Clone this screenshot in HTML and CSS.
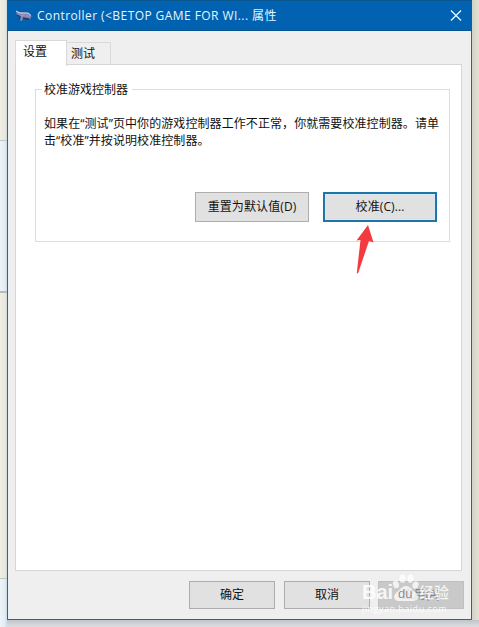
FILE: index.html
```
<!DOCTYPE html>
<html lang="zh-CN">
<head>
    <meta charset="UTF-8">
    <meta name="viewport" content="width=device-width, initial-scale=1.0">
    <title>Controller 属性</title>
    <link rel="stylesheet" href="styles.css">
</head>
<body>
    <div class="desktop">
        <div class="desktop-left">
            <div class="strip cream"></div>
            <div class="strip pale"></div>
            <div class="strip cream tall"></div>
            <div class="strip pale last"></div>
        </div>
        <div class="dialog">
            <div class="title-bar">
                <svg class="app-icon" width="16" height="14" viewBox="0 0 16 14">
                    <path d="M0 2L3 3L13 4L15.5 7L14 10L9 9L7 9L6 12L3 11L4 8L1 6Z" fill="#858bb5"/>
                    <path d="M0 2L4 4H12L15 6.5" fill="none" stroke="#d9d2e2"/>
                    <path d="M1 6L4 7.5L3.5 11M7 9L13 10" fill="none" stroke="#2c3468" stroke-width="1.3"/>
                    <path d="M5 6.5h3M11 7h2" stroke="#c9869f"/>
                </svg>
                <span class="title">Controller (&lt;BETOP GAME FOR WI... 属性</span>
                <svg class="close" width="12" height="12" viewBox="0 0 12 12">
                    <path d="M1 0.5L11 10.5M11 0.5L1 10.5" stroke="#e4f6ff" stroke-width="1.3"/>
                </svg>
            </div>
            <div class="tabs">
                <div class="tab active">设置</div>
                <div class="tab">测试</div>
            </div>
            <div class="panel">
                <div class="group">
                    <div class="group-title">校准游戏控制器</div>
                    <p>如果在“测试”页中你的游戏控制器工作不正常，你就需要校准控制器。请单<br>击“校准”并按说明校准控制器。</p>
                    <div class="group-buttons">
                        <button>重置为默认值(D)</button>
                        <button class="focused">校准(C)...</button>
                    </div>
                </div>
            </div>
            <div class="footer">
                <button>确定</button>
                <button>取消</button>
                <button class="disabled">应用(A)</button>
            </div>
        </div>
        <div class="desktop-bottom"></div>
    </div>

    <svg class="arrow" width="20" height="52" viewBox="0 0 20 52">
        <path d="M12 1L17.5 18.5L13 17L2 49.5L0.8 49L4.5 16L0.5 16.5Z" fill="#f33b3f"/>
    </svg>

    <!-- Watermark -->
    <div class="watermark">
        <div class="brand">
            <span class="bai">Bai</span>
            <span class="paw">
                <svg width="30" height="29" viewBox="0 0 30 29">
                    <ellipse cx="5" cy="10.5" rx="3" ry="3.8" transform="rotate(-15 5 10.5)"/>
                    <ellipse cx="11.5" cy="4.5" rx="3" ry="4.2"/>
                    <ellipse cx="19.5" cy="4.5" rx="3" ry="4.2" transform="rotate(10 19.5 4.5)"/>
                    <ellipse cx="24.5" cy="11" rx="3" ry="3.8" transform="rotate(18 24.5 11)"/>
                    <path d="M15 12C11 12 9 16 6 18C1 22 3 27 8 27H22C27 27 29 22 24 18C21 16 19 12 15 12Z"/>
                </svg>
                <span class="du">du</span>
            </span>
            <span class="cn">经验</span>
        </div>
        <div class="site">jingyan.baidu.com</div>
    </div>
</body>
</html>
```
FILE: styles.css
```
* {
    box-sizing: border-box;
}

body {
    margin: 0;
    width: 479px;
    height: 627px;
    overflow: hidden;
    position: relative;
    font-family: "Open Sans", "Noto Sans CJK SC", sans-serif;
    font-size: 12px;
    color: #111;
}

.desktop {
    display: grid;
    grid-template-columns: 7px 465px 7px;
    grid-template-rows: 620px 7px;
    height: 627px;
    background: linear-gradient(to right, #d2d1c5 472px, #e4e2d5 479px);
}

.desktop-left {
    grid-row: 1 / 3;
    display: flex;
    flex-direction: column;
}

.strip {
    height: 141px;
    border-bottom: 1px solid #bfc4ca;
}

.cream {
    background: linear-gradient(to right, #f0eee6, #e9e8d8 5px, #c9dcea);
}

.pale {
    height: 152px;
    border-bottom: 2px solid #b9b9b9;
    background: linear-gradient(to right, #edf5fb, #e5eaee 5px, #c1dced);
}

.tall {
    height: 286px;
}

.last {
    height: 48px;
    border: none;
}

.dialog {
    display: flex;
    flex-direction: column;
    border: 1px solid #28688f;
    border-top: none;
    background-color: #efefef;
}

.title-bar {
    display: flex;
    align-items: center;
    height: 31px;
    margin: 0 -1px;
    padding: 0 10px 0 9px;
    background-color: #0062b1;
    border-top: 1px solid #0a568f;
    border-bottom: 1px solid #07558f;
    color: #e4f6ff;
}

.title {
    flex: 1;
    margin: -1px 0 0 5px;
    letter-spacing: 0.43px;
    white-space: nowrap;
}

.tabs {
    display: flex;
    align-items: flex-end;
    height: 34px;
    padding-left: 7px;
}

.tab {
    width: 44px;
    height: 23px;
    padding-left: 4px;
    line-height: 22px;
    border: 1px solid #d9d9d9;
    border-left: none;
    border-bottom: none;
}

.tab.active {
    position: relative;
    width: 52px;
    height: 26px;
    margin-bottom: -1px;
    padding-left: 7px;
    border-left: 1px solid #d9d9d9;
    background-color: #fff;
}

.panel {
    height: 507px;
    margin: -1px 9px 0 7px;
    padding: 24px 11px 0 19px;
    border: 1px solid #d6d6d8;
    background-color: #fff;
}

.group {
    height: 153px;
    padding: 0 12px 0 8px;
    border: 1px solid #dcdcdc;
}

.group-title {
    width: 90px;
    height: 18px;
    margin: -9px 0 0 -2px;
    padding-left: 2px;
    line-height: 18px;
    background-color: #fff;
}

.group p {
    height: 36px;
    margin: 16px 0 0;
    line-height: 17px;
    letter-spacing: 0.08px;
    white-space: nowrap;
}

.group-buttons {
    display: flex;
    justify-content: flex-end;
    gap: 14px;
    margin-top: 41px;
}

button {
    width: 86px;
    height: 28px;
    padding: 0 0 2px;
    border: 1px solid #adadad;
    background-color: #e1e1e1;
    color: #111;
    font: inherit;
}

.group-buttons button {
    width: 114px;
    height: 30px;
    letter-spacing: 0.1px;
}

.group-buttons .focused {
    border: 2px solid #1d75a9;
    box-shadow: inset 0 0 0 1px #d4eaf7;
}

.footer {
    display: flex;
    justify-content: flex-end;
    gap: 9px;
    padding: 10px 7px 0 0;
}

button.disabled {
    margin-left: -1px;
    border-color: #bfbfbf;
    background-color: #c9c9c9;
    color: #858585;
}

.desktop-bottom {
    grid-column: 2 / 4;
    background: linear-gradient(to bottom, #bec5cb, #dedee1);
}

.arrow {
    position: absolute;
    left: 356px;
    top: 224px;
}

/* Translucent logo over the footer buttons */
.watermark {
    position: absolute;
    left: 362px;
    top: 573px;
    width: 96px;
    color: rgba(255, 255, 255, 0.85);
}

.brand {
    display: flex;
    align-items: flex-end;
    height: 30px;
    font: bold 20px/21px "Liberation Sans", "Noto Sans CJK SC", sans-serif;
}

.bai {
    width: 29px;
}

.paw {
    position: relative;
    width: 28px;
    height: 29px;
}

.paw svg {
    display: block;
    fill: rgba(255, 255, 255, 0.75);
}

.paw .du {
    position: absolute;
    left: 7px;
    top: 13px;
    color: #8f8f8f;
    font: 13px/13px "Liberation Sans", sans-serif;
}

.cn {
    font-size: 15px;
    font-weight: 500;
    white-space: nowrap;
}

.site {
    color: rgba(255, 255, 255, 0.85);
    font-size: 9px;
    line-height: 11px;
    letter-spacing: 0.5px;
    white-space: nowrap;
}
```
